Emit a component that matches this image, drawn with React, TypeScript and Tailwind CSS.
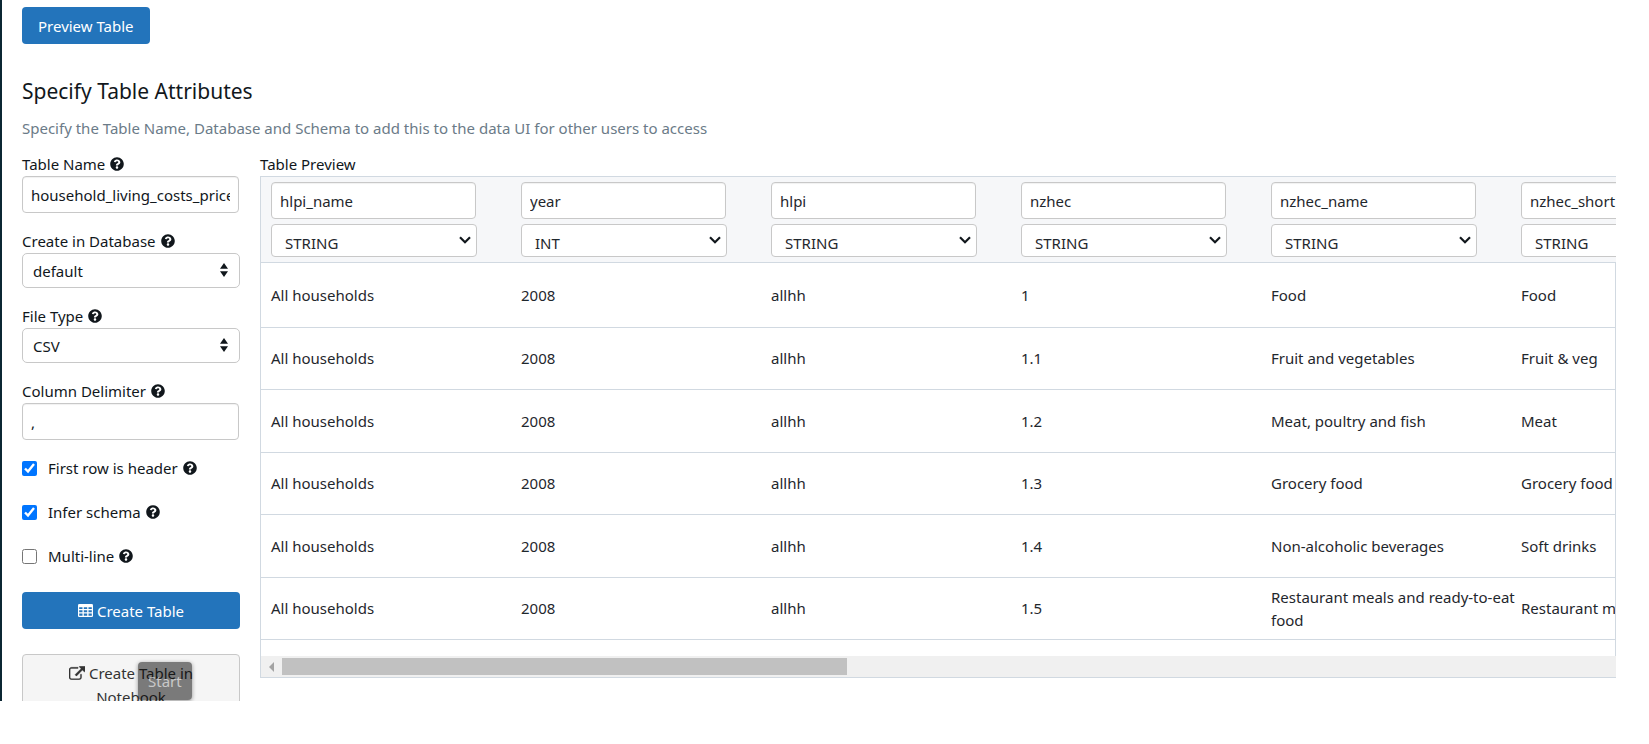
import React, { useState } from "react";
import { FaQuestionCircle } from "react-icons/fa";

const columns = [
  { name: "hlpi_name", type: "STRING" },
  { name: "year", type: "INT" },
  { name: "hlpi", type: "STRING" },
  { name: "nzhec", type: "STRING" },
  { name: "nzhec_name", type: "STRING" },
  { name: "nzhec_short", type: "STRING" },
];

const rows = [
  ["All households", "2008", "allhh", "1", "Food", "Food"],
  ["All households", "2008", "allhh", "1.1", "Fruit and vegetables", "Fruit & veg"],
  ["All households", "2008", "allhh", "1.2", "Meat, poultry and fish", "Meat"],
  ["All households", "2008", "allhh", "1.3", "Grocery food", "Grocery food"],
  ["All households", "2008", "allhh", "1.4", "Non-alcoholic beverages", "Soft drinks"],
  ["All households", "2008", "allhh", "1.5", "Restaurant meals and ready-to-eat food", "Restaurant meals"],
];

const inputClass =
  "block h-[37px] rounded-[4px] border border-[#c8c8c8] bg-white px-2 outline-none shadow-[inset_0_1px_1px_rgba(0,0,0,0.06)]";

const tableClass = "w-[1510px] table-fixed border-separate border-spacing-0 text-[#1f272d]";

function Help() {
  return <FaQuestionCircle className="inline-block size-[14px] shrink-0 text-[#11171c]" aria-hidden="true" />;
}

function FieldLabel({ htmlFor, children }: { htmlFor: string; children: string }) {
  return (
    <label htmlFor={htmlFor} className="flex h-6 items-center gap-[5px]">
      {children}
      <Help />
    </label>
  );
}

function SideSelect({ id, label, value }: { id: string; label: string; value: string }) {
  return (
    <div>
      <FieldLabel htmlFor={id}>{label}</FieldLabel>
      <div className="relative">
        <select
          id={id}
          defaultValue={value}
          className="block h-[35px] w-full appearance-none rounded-[5px] border border-[#c8c8c8] bg-white pr-8 pl-[10px] outline-none"
        >
          <option>{value}</option>
        </select>
        <svg viewBox="0 0 8 14" className="pointer-events-none absolute top-[10px] right-3 h-[14px] w-2" fill="#11171c" aria-hidden="true">
          <path d="M4 0 8 5.800H0zM4 14 0 8.200h8z" />
        </svg>
      </div>
    </div>
  );
}

function Check({ label, checked }: { label: string; checked: boolean }) {
  const [on, setOn] = useState(checked);
  return (
    <label className="flex h-6 items-center">
      <input
        type="checkbox"
        checked={on}
        onChange={() => setOn(!on)}
        className="mr-[11px] size-[15px] accent-[#0075ff]"
      />
      <span className="mr-[5px]">{label}</span>
      <Help />
    </label>
  );
}

function Columns() {
  return (
    <colgroup>
      {columns.map((c) => (
        <col key={c.name} className="w-[250px] first:w-[260px]" />
      ))}
    </colgroup>
  );
}

export default function App() {
  return (
    <div className="relative mr-[33px] h-[calc(100vh-43px)] overflow-hidden border-l-2 border-[#0b2633] bg-white pt-[7px] pl-5 font-['Noto_Sans',sans-serif] text-[15px] leading-6 text-[#11171c]">
      <button type="button" className="block h-[37px] rounded-[4px] bg-[#2374bb] px-4 text-white">
        Preview Table
      </button>

      <h2 className="mt-8 text-[21px] leading-[30px]">Specify Table Attributes</h2>
      <p className="mt-[10px] text-[#6b7b88]">
        Specify the Table Name, Database and Schema to add this to the data UI for other users to access
      </p>

      <div className="mt-3 flex items-start gap-5">
        <form className="w-[218px] shrink-0" onSubmit={(e) => e.preventDefault()}>
          <div className="flex flex-col gap-4">
            <div>
              <FieldLabel htmlFor="table-name">Table Name</FieldLabel>
              <input id="table-name" defaultValue="household_living_costs_price_indexes" className={inputClass + " w-[217px]"} />
            </div>
            <SideSelect id="database" label="Create in Database" value="default" />
            <SideSelect id="file-type" label="File Type" value="CSV" />
            <div>
              <FieldLabel htmlFor="delimiter">Column Delimiter</FieldLabel>
              <input id="delimiter" defaultValue="," className={inputClass + " w-[217px]"} />
            </div>
          </div>
          <div className="mt-4 flex flex-col gap-5">
            <Check label="First row is header" checked />
            <Check label="Infer schema" checked />
            <Check label="Multi-line" checked={false} />
          </div>
          <button type="button" className="mt-6 flex h-[37px] w-full items-center justify-center gap-1 rounded-[4px] bg-[#2374bb] text-white">
            <svg viewBox="0 0 15 13" className="h-[13px] w-[15px]" aria-hidden="true">
              <rect width="15" height="13" rx="1.3" fill="currentColor" />
              <path
                fill="#2374bb"
                d="M1.200 3.200h3.300v1.900H1.200zM5.800 3.200h3.400v1.900H5.800zM10.500 3.200h3.300v1.900h-3.300zM1.200 6.300h3.300v1.900H1.200zM5.800 6.300h3.400v1.900H5.800zM10.500 6.300h3.300v1.900h-3.300zM1.200 9.500h3.300v2.200H1.200zM5.800 9.500h3.400v2.200H5.800zM10.500 9.500h3.300v2.200h-3.300z"
              />
            </svg>
            Create Table
          </button>
          <button type="button" className="mt-[25px] block w-full rounded-[4px] border border-[#c8c8c8] bg-[#f5f5f5] px-8 py-[6px] text-[#333]">
            <svg viewBox="0 0 1792 1536" className="mr-1 inline-block h-[14px] w-4 align-[-1px]" fill="currentColor" stroke="currentColor" strokeWidth="40" aria-hidden="true">
              <path d="M1408 928v320q0 119-84.500 203.500T1120 1536H288q-119 0-203.500-84.500T0 1248V416q0-119 84.500-203.500T288 128h704q14 0 23 9t9 23v64q0 14-9 23t-23 9H288q-66 0-113 47t-47 113v832q0 66 47 113t113 47h832q66 0 113-47t47-113V928q0-14 9-23t23-9h64q14 0 23 9t9 23zM1792 64v512q0 26-19 45t-45 19-45-19l-176-176-652 652q-10 10-23 10t-23-10L695 983q-10-10-10-23t10-23l652-652-176-176q-19-19-19-45t19-45 45-19h512q26 0 45 19t19 45z" />
            </svg>
            Create Table in Notebook
          </button>
        </form>

        <section className="min-w-0 flex-1">
          <h3 className="h-6">Table Preview</h3>
          <div className="overflow-hidden border-y border-l border-[#d1d9e1]">
            <table className={tableClass}>
              <Columns />
              <thead className="bg-[#f6f7f9]">
                <tr className="h-[85px]">
                  {columns.map((c) => (
                    <th key={c.name} className="p-0 text-left align-middle font-normal first:pl-[10px]">
                      <input aria-label={"Column name " + c.name} defaultValue={c.name} className={inputClass + " w-[205px]"} />
                      <div className="relative mt-[5px] w-[206px]">
                        <select
                          aria-label={"Type of " + c.name}
                          defaultValue={c.type}
                          className="block h-[33px] w-full appearance-none rounded-[4px] border border-[#c8c8c8] bg-white pt-1 pl-[13px] outline-none"
                        >
                          <option>STRING</option>
                          <option>INT</option>
                        </select>
                        <svg viewBox="0 0 12 8" className="pointer-events-none absolute top-3 right-[6px] h-2 w-3" fill="none" stroke="#11171c" strokeWidth="2.200" aria-hidden="true">
                          <path d="m1 1.200 5 5 5-5" />
                        </svg>
                      </div>
                    </th>
                  ))}
                </tr>
              </thead>
            </table>
            <div className="h-[394px] overflow-hidden border-t border-r border-[#d1d9e1]">
              <table className={tableClass}>
                <Columns />
                <tbody>
                  {rows.map((r, n) => (
                    <tr key={r[3]} className={n === 0 ? "h-[65px]" : n % 2 ? "h-[62px]" : "h-[63px]"}>
                      {r.map((cell, i) => (
                        <td key={i} className="border-b border-[#d1d9e1] p-0 leading-[23px] first:pl-[10px] last:whitespace-nowrap">
                          {cell}
                        </td>
                      ))}
                    </tr>
                  ))}
                </tbody>
              </table>
            </div>
            <div className="flex h-[21px] items-center bg-[#f0f0f0]" aria-hidden="true">
              <svg viewBox="0 0 5 10" className="mr-2 ml-2 h-[10px] w-[5px]" fill="#a3a3a3">
                <path d="M5 0v10L0 5z" />
              </svg>
              <div className="h-[17px] w-5/12 bg-[#c1c1c1]" />
            </div>
          </div>
        </section>
      </div>

      <div className="absolute bottom-[1px] left-[136px] rounded-[4px] bg-black/50 px-[10px] py-[7px] text-white/60 shadow-[0_1px_4px_rgba(0,0,0,0.4)]">
        Start
      </div>
    </div>
  );
}
